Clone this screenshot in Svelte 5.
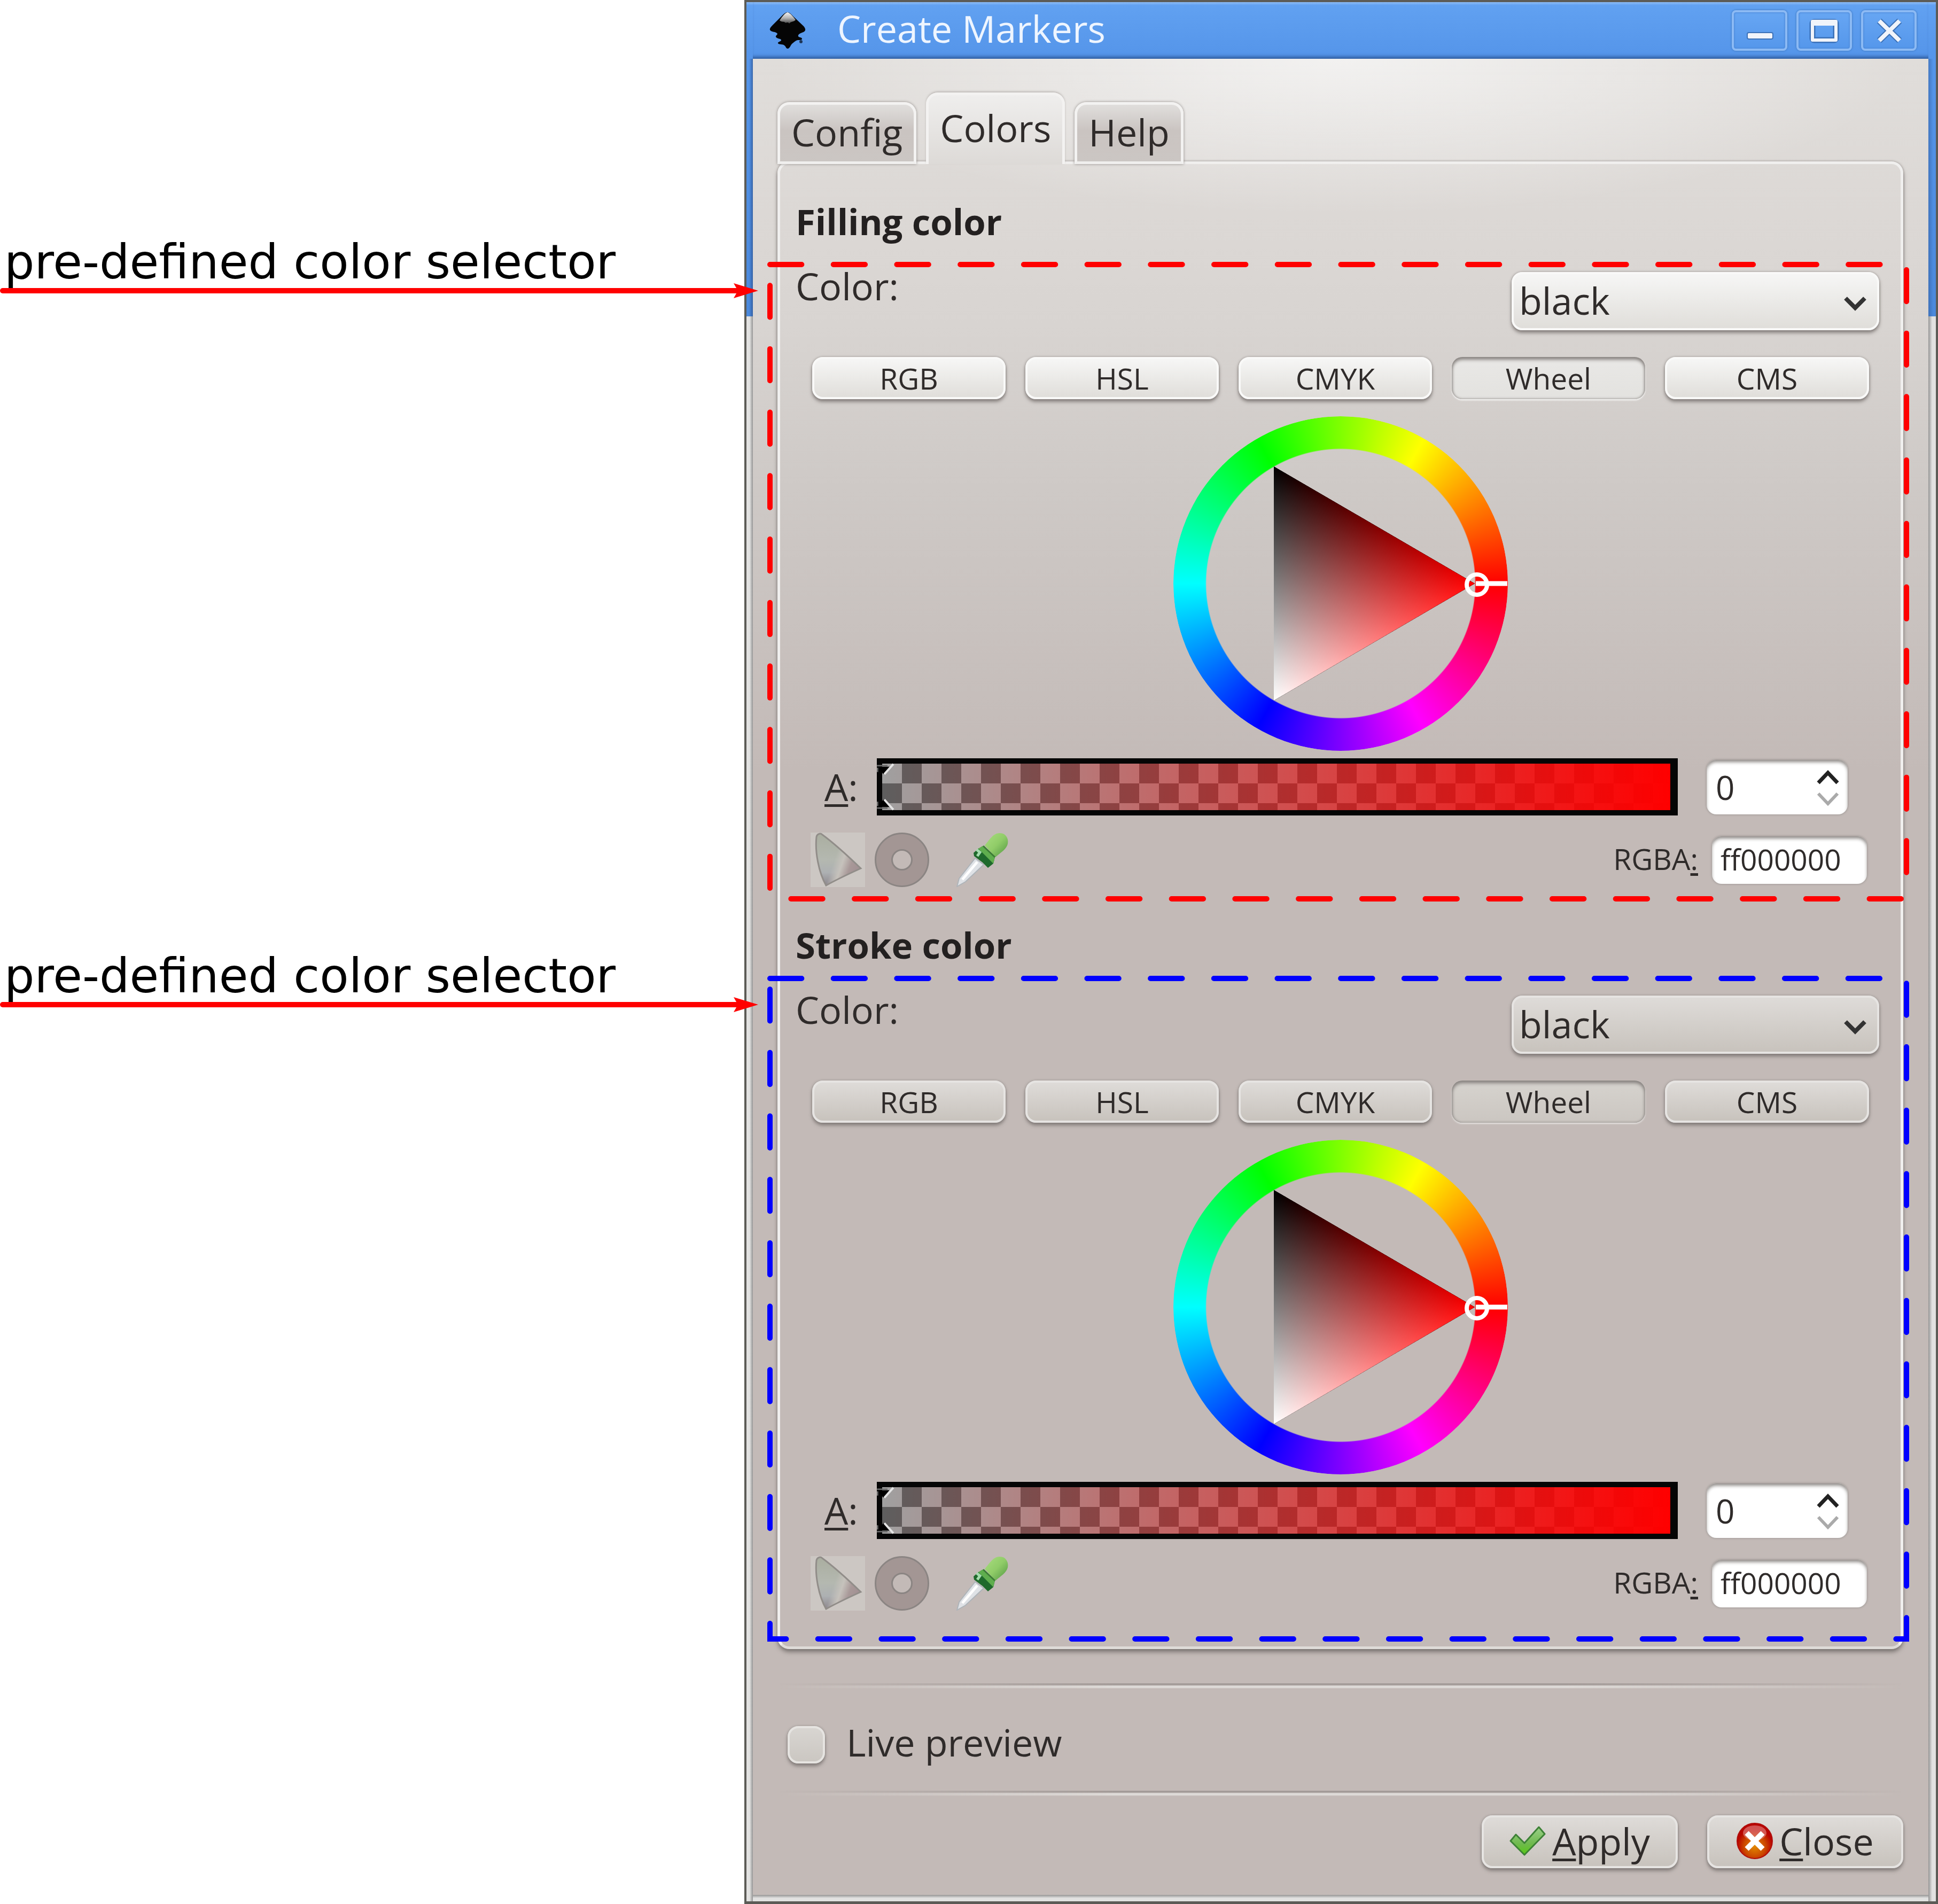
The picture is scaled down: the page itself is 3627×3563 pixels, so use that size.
<script>
  const tabs = ['Config', 'Colors', 'Help'];
  const modes = ['RGB', 'HSL', 'CMYK', 'Wheel', 'CMS'];
  const sections = [
    { id: 'fill', title: 'Filling color', tone: 'light', outlineLength: 5583 },
    { id: 'stroke', title: 'Stroke color', tone: 'dark', outlineLength: 5667 }
  ];
  const notes = ['pre-defined color selector', 'pre-defined color selector'];
</script>

<main class="page">
  <aside class="notes">
    {#each notes as note}
      <div class="note">
        <p>{note}</p>
        <div class="arrow">
          <span class="shaft"></span>
          <svg class="head" viewBox="0 0 46 28" aria-hidden="true"><path d="M46 14 L0 0 L8 14 L0 28 Z" fill="#f00" /></svg>
        </div>
      </div>
    {/each}
  </aside>

  <section class="window">
    <header class="titlebar">
      <svg class="logo" viewBox="0 0 68 70" aria-hidden="true">
        <defs>
          <linearGradient id="snow" x1="0" y1="0" x2="0" y2="1">
            <stop offset="0" stop-color="#f4f4f4" />
            <stop offset=".5" stop-color="#b5b5b5" />
            <stop offset="1" stop-color="#4a4a4a" />
          </linearGradient>
        </defs>
        <path d="M34 1 C38 1 41 5 45 9 L64 27 C69 33 68 37 61 39 C56 41 53 43 54 46 C56 49 61 47 61 51 C61 54 53 52 50 54 C46 57 42 59 40 63 C38 67 36 69 34 69 C31 69 31 65 28 63 C25 60 18 62 16 59 C15 56 22 56 22 53 C22 50 14 51 12 47 C11 44 17 43 14 40 C10 37 3 38 1 34 C0 31 4 27 7 24 L23 8 C27 4 30 1 34 1 Z" fill="#050505" />
        <path d="M34 1 C39 2 45 10 49 15 C45 20 41 17 37 22 C34 17 31 23 28 19 C25 18 23 20 19 16 C24 9 29 2 34 1 Z" fill="url(#snow)" />
        <circle cx="59" cy="56" r="3" fill="#1d3557" />
      </svg>
      <h1>Create Markers</h1>
      <div class="controls">
        <button type="button" aria-label="Minimize">
          <svg viewBox="0 0 104 76"><rect x="29" y="42" width="48" height="12" rx="3" fill="#f1f4fa" stroke="#3d72b8" stroke-width="2" /></svg>
        </button>
        <button type="button" aria-label="Maximize">
          <svg viewBox="0 0 104 76">
            <rect x="30" y="22" width="44" height="34" rx="3" fill="none" stroke="#3d72b8" stroke-width="11" />
            <path d="M30 26 H74 M30 21 H74 V56 H30 Z" fill="none" stroke="#f1f4fa" stroke-width="6" stroke-linejoin="round" />
          </svg>
        </button>
        <button type="button" aria-label="Close window">
          <svg viewBox="0 0 104 76">
            <path d="M34 20 L72 57 M72 20 L34 57" stroke="#3d72b8" stroke-width="12" />
            <path d="M34 20 L72 57 M72 20 L34 57" stroke="#f1f4fa" stroke-width="8" />
          </svg>
        </button>
      </div>
    </header>

    <div class="body">
      <div class="tabs" role="tablist">
        {#each tabs as tab}
          <button type="button" role="tab" class="tab" class:active={tab === 'Colors'} aria-selected={tab === 'Colors'}>{tab}</button>
        {/each}
      </div>

      <div class="panel" role="tabpanel">
        {#each sections as s}
          <section class="group {s.tone}">
            <h2>{s.title}</h2>
            <div class="picker">
              <svg class="outline" aria-hidden="true">
                <rect width="100%" height="100%" pathLength={s.outlineLength} />
              </svg>

              <div class="row choose">
                <label for="{s.id}-color">Color:</label>
                <div class="select">
                  <select id="{s.id}-color"><option>black</option></select>
                  <svg viewBox="0 0 42 28" aria-hidden="true"><path d="M3 4 L21 22 L39 4" fill="none" stroke="#333" stroke-width="8" /></svg>
                </div>
              </div>

              <div class="modes">
                {#each modes as mode}
                  <button type="button" class="btn mode" class:pressed={mode === 'Wheel'} aria-pressed={mode === 'Wheel'}>{mode}</button>
                {/each}
              </div>

              <div class="wheel">
                <div class="ring"></div>
                <svg viewBox="0 0 626 626" aria-hidden="true">
                  <defs>
                    <linearGradient id="{s.id}-sat" gradientUnits="userSpaceOnUse" x1="188" y1="0" x2="564" y2="0">
                      <stop offset="0" stop-color="#000" /><stop offset="1" stop-color="#f00" />
                    </linearGradient>
                    <linearGradient id="{s.id}-val" gradientUnits="userSpaceOnUse" x1="376" y1="204" x2="188" y2="532">
                      <stop offset="0" stop-color="#000" /><stop offset="1" stop-color="#fff" />
                    </linearGradient>
                  </defs>
                  <g class="triangle">
                    <path d="M188 94 L564 313 L188 532 Z" fill="url(#{s.id}-sat)" />
                    <path class="add" d="M188 94 L564 313 L188 532 Z" fill="url(#{s.id}-val)" />
                  </g>
                  <path d="M566 313 H625" stroke="#fff" stroke-width="9" />
                  <circle cx="568" cy="315" r="19" fill="none" stroke="#fff" stroke-width="8" />
                </svg>
              </div>

              <div class="row alpha">
                <label for="{s.id}-alpha"><span class="key">A</span>:</label>
                <div class="bar">
                  <input id="{s.id}-alpha" type="range" min="0" max="255" value="0" />
                  <svg viewBox="0 0 40 108" aria-hidden="true">
                    <path d="M0 14 H20 M0 94 H20 M1 18 V26 M1 82 V90" stroke="#6a6a6a" stroke-width="3" />
                    <path d="M2 16 H24 L12 30 Z M2 92 H24 L12 78 Z" fill="#000" />
                    <path d="M31 11 L14 30 M31 97 L14 78" stroke="#e4e4e4" stroke-width="4" />
                  </svg>
                </div>
                <div class="spin">
                  <input type="text" inputmode="numeric" value="0" aria-label="Alpha value" />
                  <div class="steps">
                    <button type="button" aria-label="Increase"><svg viewBox="0 0 42 28"><path d="M3 25 L21 6 L39 25" fill="none" stroke="#222" stroke-width="7" /></svg></button>
                    <button type="button" aria-label="Decrease"><svg viewBox="0 0 42 28"><path d="M3 3 L21 22 L39 3" fill="none" stroke="#aaa" stroke-width="6" /></svg></button>
                  </div>
                </div>
              </div>

              <div class="row tools">
                <button type="button" class="tool" aria-label="Out of gamut">
                  <svg viewBox="0 0 102 102">
                    <defs>
                      <linearGradient id="{s.id}-gamut" x1="0" y1="0" x2="0" y2="1">
                        <stop offset="0" stop-color="#aaaea0" /><stop offset=".5" stop-color="#b4b8b0" /><stop offset=".75" stop-color="#adb0b2" /><stop offset="1" stop-color="#8c868c" />
                      </linearGradient>
                      <linearGradient id="{s.id}-edge" x1=".35" y1=".65" x2=".85" y2=".85">
                        <stop offset="0" stop-color="#c6c2bc" stop-opacity="0" /><stop offset=".35" stop-color="#c6c2bc" /><stop offset=".7" stop-color="#a89898" /><stop offset="1" stop-color="#a39294" />
                      </linearGradient>
                    </defs>
                    <rect width="102" height="102" fill="#ccc7c3" />
                    <path d="M11 8 C12 3 18 0 22 4 C44 20 68 42 94 67 C72 77 50 87 29 99 C15 74 8 36 11 8 Z" fill="url(#{s.id}-gamut)" />
                    <path d="M11 8 C12 3 18 0 22 4 C44 20 68 42 94 67 C72 77 50 87 29 99 C15 74 8 36 11 8 Z" fill="url(#{s.id}-edge)" stroke="#918d89" stroke-width="3" />
                  </svg>
                </button>
                <button type="button" class="tool" aria-label="Color managed">
                  <svg viewBox="0 0 102 102"><circle cx="51" cy="51" r="34" fill="none" stroke="#8b8583" stroke-width="34" /><circle cx="51" cy="51" r="34" fill="none" stroke="#a39694" stroke-width="28" /></svg>
                </button>
                <button type="button" class="tool pick" aria-label="Pick colors from image">
                  <svg viewBox="0 0 102 102">
                    <defs>
                      <linearGradient id="{s.id}-bulb" x1="0" y1="0" x2="1" y2="1">
                        <stop offset="0" stop-color="#a9dd7f" /><stop offset=".5" stop-color="#90cc68" /><stop offset="1" stop-color="#4f9440" />
                      </linearGradient>
                    </defs>
                    <path d="M38 48 L54 60 L20 92 L4 101 L8 86 Z" fill="#dfe2e6" stroke="#aeb4b9" stroke-width="2" />
                    <path d="M42 55 L14 88" stroke="#fff" stroke-width="5" />
                    <path d="M35 38 L44 30 L54 26 L75 46 L72 58 L62 66 L52 56 L44 50 L36 44 Z" fill="#1f6a2c" />
                    <path d="M44 30 L52 25 L75 46 L72 58 Z" fill="#5fae4e" />
                    <path d="M41 32 L47 37 L42 44" fill="none" stroke="#a5dcae" stroke-width="5" />
                    <path d="M56 24 C66 12 72 1 84 1 C96 1 101 12 99 21 C97 31 86 37 76 46 Z" fill="url(#{s.id}-bulb)" />
                    <path d="M53 25 L75 46" stroke="#3c7c35" stroke-width="3" />
                  </svg>
                </button>
                <div class="rgba">
                  <label for="{s.id}-rgba">RGBA<span class="key">:</span></label>
                  <input id="{s.id}-rgba" type="text" value="ff000000" />
                </div>
              </div>
            </div>
          </section>
        {/each}
      </div>

      <hr />
      <label class="preview"><input type="checkbox" />Live preview</label>
      <hr />

      <footer class="dark">
        <button type="button" class="btn action">
          <svg viewBox="0 0 68 68" aria-hidden="true">
            <defs><linearGradient id="tick" x1="0" y1="0" x2="0" y2="1"><stop offset="0" stop-color="#9bd08a" /><stop offset=".6" stop-color="#6fb94e" /><stop offset="1" stop-color="#56c912" /></linearGradient></defs>
            <path d="M2 34 L12 22 L28 38 L55 8 L66 21 L28 60 Z" fill="url(#tick)" stroke="#3d8136" stroke-width="3" stroke-linejoin="round" />
          </svg>
          <span><span class="key">A</span>pply</span>
        </button>
        <button type="button" class="btn action">
          <svg viewBox="0 0 68 68" aria-hidden="true">
            <defs>
              <radialGradient id="stop" cx=".5" cy=".65" r=".5"><stop offset="0" stop-color="#e28a00" /><stop offset=".6" stop-color="#cc4a00" /><stop offset="1" stop-color="#b80500" /></radialGradient>
              <linearGradient id="gloss" x1="0" y1="0" x2="0" y2="1"><stop offset="0" stop-color="#d05050" /><stop offset="1" stop-color="#e88f88" stop-opacity=".5" /></linearGradient>
            </defs>
            <circle cx="34" cy="34" r="33" fill="url(#stop)" stroke="#b00d0a" stroke-width="2" />
            <ellipse cx="34" cy="19" rx="22" ry="14" fill="url(#gloss)" />
            <path d="M19 19 L49 49 M49 19 L19 49" stroke="#fff" stroke-width="10" />
          </svg>
          <span><span class="key">C</span>lose</span>
        </button>
      </footer>
    </div>
  </section>
</main>

<style>
  :global(body) {
    background: #fff;
  }

  .page {
    --text: 70px;
    --small: 55px;
    display: grid;
    grid-template-columns: minmax(0, 1393fr) minmax(0, 2234fr);
    min-height: 100vh;
    font-family: 'Open Sans', 'Noto Sans', sans-serif;
    font-size: var(--text);
    line-height: 80px;
    color: #2f2b2a;
  }

  button,
  input,
  select {
    box-sizing: border-box;
    margin: 0;
    padding: 0;
    border: 0;
    background: none;
    font: inherit;
    color: inherit;
    appearance: none;
  }

  svg {
    display: block;
  }

  label {
    white-space: nowrap;
  }

  .key {
    text-decoration: underline 5px;
    text-underline-offset: 6px;
    text-decoration-skip-ink: none;
  }

  /* annotations */
  .notes {
    position: relative;
    z-index: 1;
    display: flex;
    flex-direction: column;
    gap: 1206px;
    padding-top: 430px;
    font-family: 'DejaVu Sans', sans-serif;
    font-size: 89px;
    line-height: 120px;
    color: #000;
  }

  .note {
    height: 130px;
  }

  .note p {
    margin: 0 0 0 8px;
    white-space: nowrap;
  }

  .arrow {
    display: flex;
    align-items: center;
    height: 28px;
    margin: -20px -26px 0 0;
  }

  .shaft {
    flex: 1;
    height: 10px;
    margin-right: -10px;
    border-radius: 5px;
    background: #f00;
  }

  .head {
    width: 46px;
    height: 28px;
  }

  /* window frame */
  .window {
    display: flex;
    flex-direction: column;
    padding: 0 14px 12px 12px;
    border: 4px solid #5c5b56;
    border-bottom-width: 5px;
    background:
      linear-gradient(90deg, #0000 5px, #1c396e80 12px) 0 106px / 12px 482px no-repeat,
      linear-gradient(270deg, #0000 5px, #1c396e50 14px) 100% 106px / 14px 482px no-repeat,
      linear-gradient(#8dbcf5, #61a1f1 6px, #5696ea 92px, #4b89dc 588px, #0000 588px),
      linear-gradient(90deg, #e2e2e1 0 6px, #949494 12px, #0000 12px) 0 0,
      linear-gradient(270deg, #e2e2e1 0 7px, #949494 14px, #0000 14px) 0 0,
      linear-gradient(0deg, #e2e2e1 0 6px, #949494 12px);
  }

  .titlebar {
    display: flex;
    align-items: center;
    height: 106px;
    padding: 0 22px 0 31px;
    box-shadow: inset 0 -8px 6px -4px #2f5c9f;
    color: #eef5ff;
  }

  .logo {
    width: 68px;
    height: 70px;
  }

  h1 {
    flex: 1;
    margin: 0 0 8px 59px;
    font-size: var(--text);
    font-weight: 400;
  }

  .controls {
    display: flex;
    gap: 17px;
  }

  .controls button {
    width: 104px;
    height: 76px;
    border: 4px solid #8cbaf4;
    border-radius: 8px;
    background: linear-gradient(#67a6f3, #5597eb);
    box-shadow: 0 0 3px 1px #4580cb, inset 0 0 3px 1px #4c89d8;
  }

  .controls svg {
    width: 104px;
    height: 76px;
    margin: -4px;
  }

  .body {
    flex: 1;
    padding: 60px 47px 40px 46px;
    background:
      radial-gradient(ellipse 1060px 290px at 50% 0, #f2f1f0, #f2f1f000) no-repeat,
      linear-gradient(#e0ddda, #dbd7d4 350px, #d8d4d1 500px, #cec9c6 800px, #c3bab7 1330px, #c3bab7);
  }

  /* tabs */
  .tabs {
    display: flex;
    align-items: flex-end;
    gap: 18px;
    height: 137px;
    margin-bottom: -5px;
  }

  .tab {
    height: 116px;
    padding: 0 21px 4px;
    border: 5px solid #f3f2f1;
    border-bottom-color: #f0efee;
    border-radius: 22px 22px 0 0;
    background: linear-gradient(#e0dedc, #cac4c1 45%, #cbc6c3);
    background-clip: padding-box;
    box-shadow: 0 0 5px #8f8a87;
  }

  .tab.active {
    position: relative;
    z-index: 1;
    height: 134px;
    padding-bottom: 8px;
    border-bottom: 0;
    background: linear-gradient(#efeeed, #dddad7);
    box-shadow: 0 -2px 4px -1px #aaa5a2;
  }

  .panel {
    display: flex;
    flex-direction: column;
    gap: 46px;
    padding: 67px 0 45px;
    border: 5px solid #f0efee;
    border-bottom-color: #dedbd8;
    border-radius: 22px;
    box-shadow: 0 6px 8px -1px #77716e, 0 0 4px #99938f;
  }

  h2 {
    margin: 0 0 41px 29px;
    font-size: 67px;
    font-weight: 700;
    line-height: 80px;
    color: #232020;
  }

  .picker {
    position: relative;
    padding-bottom: 22px;
  }

  .outline {
    position: absolute;
    inset: 0 -11px 0 -19px;
    width: calc(100% + 30px);
    height: 100%;
    overflow: visible;
    pointer-events: none;
  }

  .outline rect {
    fill: none;
    stroke: #f00;
    stroke-width: 10px;
    stroke-linecap: round;
    stroke-dasharray: 50 50;
  }

  .dark .outline {
    top: -18px;
    height: calc(100% + 49px);
  }

  .dark .outline rect {
    stroke: #00f;
  }

  .row {
    display: flex;
  }

  .light {
    --hi: #f9f9f8;
    --top: #f6f6f5;
    --low: #e0deda;
    --flat-top: #e9e8e6;
    --flat-low: #e3e2df;
  }

  .dark {
    --hi: #e6e4e2;
    --top: #dedbd8;
    --low: #c8c3bd;
    --flat-top: #d6d3ce;
    --flat-low: #cbc6c1;
  }

  .choose {
    justify-content: space-between;
    padding: 0 40px 0 29px;
  }

  .select {
    position: relative;
    width: 688px;
    margin-top: 14px;
  }

  .select select {
    display: block;
    width: 100%;
    height: 109px;
    padding: 0 90px 4px 10px;
  }

  .select svg {
    position: absolute;
    right: 24px;
    top: 45px;
    width: 42px;
    height: 28px;
  }

  .btn,
  .select select {
    border: 4px solid var(--hi);
    border-radius: 20px;
    background: linear-gradient(var(--top), var(--low));
    box-shadow: 0 5px 6px #77716ecc, 0 0 4px #9b9693;
  }

  .modes {
    display: grid;
    grid-template-columns: 36fr 36fr 36fr 36fr 38fr;
    gap: 37px;
    margin: 50px 59px 0 60px;
  }

  .mode {
    height: 79px;
    font-size: var(--small);
    line-height: 60px;
  }

  .pressed {
    border: 0;
    background: linear-gradient(var(--flat-top), var(--flat-low));
    box-shadow: inset 0 5px 6px #8a8582, inset 0 0 5px #8a8582, 0 2px 3px var(--hi);
  }

  .wheel {
    position: relative;
    width: 626px;
    height: 626px;
    margin: 32px auto 0;
  }

  .wheel svg {
    position: relative;
  }

  .ring {
    position: absolute;
    inset: 0;
    border-radius: 50%;
    background: conic-gradient(from 90deg, #f00, #f0f, #00f, #0ff, #0f0, #ff0, #f00);
    mask: radial-gradient(circle closest-side, #0000 251px, #000 253px);
  }

  .triangle {
    isolation: isolate;
  }

  .add {
    mix-blend-mode: plus-lighter;
  }

  .alpha {
    align-items: center;
    margin-top: 14px;
    padding: 0 99px 0 83px;
  }

  .alpha label {
    width: 98px;
    padding-bottom: 2px;
  }

  .bar {
    position: relative;
    flex: 1;
    height: 107px;
  }

  .bar input {
    display: block;
    width: 100%;
    height: 107px;
    border: 10px solid #050505;
    border-right-width: 14px;
    background:
      linear-gradient(90deg, #f000, #f00),
      conic-gradient(#5e5e5e 25%, #a0a0a0 0 50%, #5e5e5e 0 75%, #a0a0a0 0) 0 0 / 74px 74px;
    background-origin: padding-box;
    background-clip: padding-box;
  }

  .bar input::-webkit-slider-thumb {
    appearance: none;
    width: 20px;
    height: 87px;
  }

  .bar svg {
    position: absolute;
    inset: 0 auto 0 0;
    width: 40px;
    height: 107px;
    pointer-events: none;
  }

  .spin,
  .rgba input {
    border-radius: 18px;
    background: #fff;
    box-shadow: inset 0 5px 6px -1px #8e8986, 0 0 4px #8e8986;
  }

  .spin {
    display: flex;
    width: 264px;
    height: 102px;
    margin-left: 54px;
    padding: 0 16px 0 17px;
    box-sizing: border-box;
  }

  .spin input {
    flex: 1;
    width: 0;
    font-size: 62px;
  }

  .steps {
    display: flex;
    flex-direction: column;
    justify-content: space-between;
    padding: 18px 0 14px;
  }

  .steps svg {
    width: 42px;
    height: 28px;
  }

  .tools {
    align-items: center;
    height: 102px;
    margin-top: 32px;
    padding: 0 63px 0 57px;
  }

  .tool {
    width: 102px;
    height: 102px;
    margin-right: 18px;
  }

  .pick {
    margin-left: 30px;
  }

  .rgba {
    display: flex;
    align-items: center;
    gap: 26px;
    margin-left: auto;
    font-size: var(--small);
  }

  .rgba label {
    padding-bottom: 4px;
  }

  .rgba input {
    width: 290px;
    height: 89px;
    padding: 0 16px 4px;
  }

  hr {
    height: 10px;
    margin: 64px 0 60px;
    border: 0;
    background: linear-gradient(#a39b98 0 3px, #dedbd8 5px 8px, #c3bab7);
    mask: linear-gradient(90deg, #0000, #000 30%, #000 70%, #0000);
  }

  .preview {
    display: flex;
    align-items: center;
    gap: 40px;
    padding-left: 19px;
  }

  .preview input {
    width: 70px;
    height: 70px;
    margin-top: 10px;
    border: 4px solid #e6e4e1;
    border-radius: 20px;
    background: linear-gradient(#d8d5d1, #cbc7c2);
    box-shadow: 0 5px 6px #77716ecc, 0 0 4px #9b9693;
  }

  .preview + hr {
    margin: 51px 0 36px;
  }

  footer {
    display: flex;
    justify-content: flex-end;
    gap: 55px;
  }

  .action {
    display: flex;
    align-items: center;
    justify-content: center;
    gap: 12px;
    width: 367px;
    height: 99px;
    padding-bottom: 4px;
  }

  .action svg {
    width: 68px;
    height: 68px;
  }
</style>
